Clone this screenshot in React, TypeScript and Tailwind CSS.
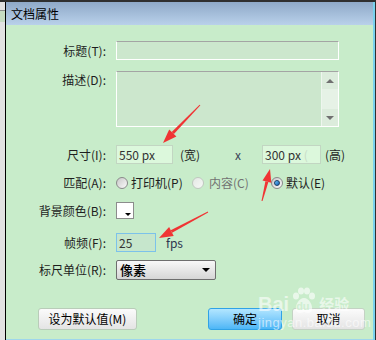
import React from "react";

const label = "w-[100px] shrink-0 text-right text-[12px] leading-[16px] text-[#1e1e1e]";

function Radio({ checked = false, disabled = false }: { checked?: boolean; disabled?: boolean }) {
  return (
    <span
      className={
        "w-[12px] h-[12px] shrink-0 rounded-full border flex items-center justify-center bg-gradient-to-br " +
        (disabled
          ? "border-[#c0c8c0] from-[#e4e8e4] to-[#f6f8f6]"
          : "border-[#8a8a8a] from-[#c8c8c8] to-[#fbfbfb]")
      }
    >
      {checked && (
        <span className="w-[6px] h-[6px] rounded-full border border-[#1b3f66] bg-gradient-to-br from-[#6cc4ff] to-[#0f5fb0]" />
      )}
    </span>
  );
}

function Arrows() {
  return (
    <svg className="absolute inset-0 pointer-events-none" width="376" height="340" viewBox="0 0 376 340">
      <g fill="#f03434">
        <polygon points="200.4,103.3 199.6,102.7 171.7,129.9 173.9,132.0" />
        <polygon points="163,141 176.4,134.5 169.2,127.5" />
        <polygon points="262.5,199.1 261.5,198.9 265.4,179.2 268.4,180.0" />
        <polygon points="270,167 271.3,180.7 262.5,178.5" />
        <polygon points="208.2,210.4 207.8,209.6 170.7,228.2 172.1,230.8" />
        <polygon points="159,236 173.7,233.9 169.1,225.1" />
      </g>
    </svg>
  );
}

function Watermark() {
  return (
    <div className="absolute left-[258px] top-[283px] pointer-events-none text-white/60">
      <div className="flex items-end h-[30px]">
        <span className="font-['Liberation_Sans',sans-serif] font-bold text-[20px] leading-[22px]">Bai</span>
        <span className="relative w-[28px] h-[28px] mx-[1px]">
          <svg width="28" height="28" viewBox="0 0 28 28" className="absolute inset-0">
            <g fill="rgba(255,255,255,0.6)">
              <ellipse cx="6" cy="9" rx="3" ry="3.6" />
              <ellipse cx="11" cy="4" rx="3" ry="3.6" />
              <ellipse cx="17" cy="4" rx="3" ry="3.6" />
              <ellipse cx="22" cy="9" rx="3" ry="3.6" />
              <path d="M14 11 C 9 11, 5 18, 6 23 C 7 27, 12 26, 14 25 C 16 26, 21 27, 22 23 C 23 18, 19 11, 14 11 Z" />
            </g>
          </svg>
          <span className="absolute left-[6px] top-[13px] font-['Liberation_Sans',sans-serif] font-bold text-[11px] leading-[12px] text-[#c8ecca]/80">du</span>
        </span>
        <span className="text-[15px] leading-[22px] font-bold">经验</span>
      </div>
      <div className="font-['Liberation_Sans',sans-serif] text-[13px] leading-[16px] tracking-[0.5px]">jingyan.baidu.com</div>
    </div>
  );
}

export default function App() {
  return (
    <div className="relative w-[376px] h-[340px] overflow-hidden flex border-t-2 border-[#2f2f2f] bg-[#2f2f2f] font-['Noto_Sans_CJK_SC',sans-serif]">
      <div className="w-[5px] h-full bg-[#e2e2e2] flex flex-col">
        <div className="h-[8px]" />
        <div className="h-px bg-[#8c8c8c]" />
        <div className="h-[11px] bg-[#c6dcc2]" />
      </div>
      <div className="flex-1 flex flex-col border-l border-black border-r-2 border-r-[#7ad2ee]">
        <div className="h-[23px] shrink-0 bg-gradient-to-b from-[#8fa9c8] to-[#b9d1ea] flex items-center pl-[5px] text-[12px] text-black">
          文档属性
        </div>
        <div className="flex-1 bg-[#c8ecca] border-b border-[#9ed6ec] flex flex-col">
          <div className="mt-[16px] flex items-center">
            <span className={label}>标题(T):</span>
            <div className="ml-[10px] w-[223px] h-[19px] border border-white border-t-[#a4a4a4] bg-[#cce7cd]" />
          </div>

          <div className="mt-[11px] flex items-start">
            <span className={label + " mt-[1px]"}>描述(D):</span>
            <div className="ml-[10px] w-[223px] h-[56px] border border-white border-t-[#a4a4a4] bg-[#cce7cd] flex">
              <div className="flex-1" />
              <div className="w-[17px] flex flex-col border-l border-[#eef6ee] bg-[#dcecdc]">
                <div className="h-[17px] flex items-center justify-center">
                  <span className="w-0 h-0 border-x-[4px] border-x-transparent border-b-[4px] border-b-[#707070]" />
                </div>
                <div className="flex-1 bg-[#e6f2e6]" />
                <div className="h-[17px] flex items-center justify-center">
                  <span className="w-0 h-0 border-x-[4px] border-x-transparent border-t-[4px] border-t-[#707070]" />
                </div>
              </div>
            </div>
          </div>

          <div className="mt-[18px] flex items-center text-[12px] leading-[16px] text-[#1e1e1e]">
            <span className={label}>尺寸(I):</span>
            <div className="ml-[10px] w-[57px] h-[19px] border border-[#c2d6c2] bg-[#dcf8dc] flex items-center pl-[2px] text-[#333]">
              550 px
            </div>
            <span className="w-[62px] pl-[7px]">(宽)</span>
            <span className="w-[27px] text-[#3c4658]">x</span>
            <div className="w-[59px] h-[19px] border border-[#c2d6c2] bg-[#dcf8dc] flex items-center pl-[2px] text-[#333]">
              300 px <span className="ml-[3px] text-[#c8dcc8]">(</span>
            </div>
            <span className="pl-[4px]">(高)</span>
          </div>

          <div className="mt-[10px] h-[18px] flex items-center text-[12px] leading-[16px] text-[#1e1e1e]">
            <span className={label}>匹配(A):</span>
            <span className="ml-[10px]">
              <Radio />
            </span>
            <span className="ml-[3px] w-[61px]">打印机(P)</span>
            <Radio disabled />
            <span className="ml-[5px] w-[62px] text-[#727272]">内容(C)</span>
            <Radio checked />
            <span className="ml-[3px]">默认(E)</span>
          </div>

          <div className="mt-[10px] h-[17px] flex items-center">
            <span className={label}>背景颜色(B):</span>
            <div className="ml-[10px] w-[18px] h-[17px] border border-[#8c8c8c] bg-white relative">
              <span className="absolute right-[2px] bottom-[2px] w-0 h-0 border-x-[3px] border-x-transparent border-t-[3px] border-t-black" />
            </div>
          </div>

          <div className="mt-[14px] flex items-center text-[12px] leading-[16px]">
            <span className={label}>帧频(F):</span>
            <div className="ml-[10px] w-[40px] h-[19px] border border-[#7cc2ea] bg-[#c6e6cc] flex items-center pl-[2px] text-[#333]">
              25
            </div>
            <span className="ml-[10px] text-[#2e3650]">fps</span>
          </div>

          <div className="mt-[8px] flex items-center">
            <span className={label}>标尺单位(R):</span>
            <div className="ml-[10px] w-[100px] h-[20px] rounded-[2px] border border-[#6e6e6e] bg-gradient-to-b from-[#f8f8f8] to-[#d6d6d6] flex items-center justify-between pl-[3px] pr-[5px]">
              <span className="text-[13px] leading-[16px] font-medium text-black">像素</span>
              <span className="w-0 h-0 border-x-[4px] border-x-transparent border-t-[4px] border-t-black" />
            </div>
          </div>

          <div className="mt-[28px] flex items-center text-[12px] leading-[16px] text-black">
            <div className="ml-[32px] w-[99px] h-[22px] rounded-[3px] border border-[#b9ccb9] bg-gradient-to-b from-[#fbfbfb] to-[#e4e4e4] flex items-center justify-center">
              设为默认值(M)
            </div>
            <div className="ml-[71px] w-[74px] h-[22px] rounded-[3px] border border-[#30a2e6] bg-gradient-to-b from-[#b2e6ff] to-[#4cb6f6] flex items-center justify-center">
              确定
            </div>
            <div className="ml-[10px] w-[73px] h-[22px] rounded-[3px] border border-[#c4d2c4] bg-gradient-to-b from-[#fbfbfb] to-[#e4e4e4] flex items-center justify-center">
              取消
            </div>
          </div>
        </div>
      </div>
      <div className="w-px h-full bg-[#2f2f2f]" />
      <Arrows />
      <Watermark />
    </div>
  );
}
